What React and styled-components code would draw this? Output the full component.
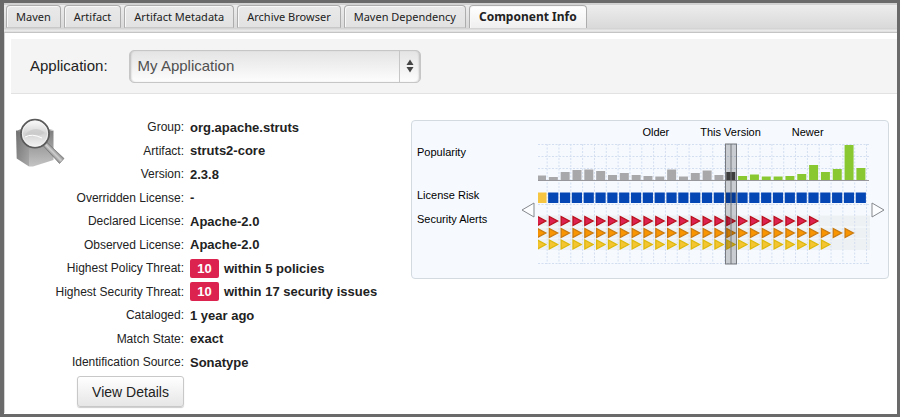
import React from 'react';
import styled, { createGlobalStyle } from 'styled-components';

const GlobalStyle = createGlobalStyle`
  *, *::before, *::after {
    box-sizing: border-box;
  }

  body {
    margin: 0;
    background: #fff;
    color: #222;
    font-family: 'Liberation Sans', Arial, sans-serif;
    font-size: 12px;
  }

  button, select {
    font-family: inherit;
    margin: 0;
  }
`;

const Frame = styled.div`
  min-height: 100vh;
  border: 3px solid #6a6a6a;
  border-left-width: 4px;
  background: #fff;
`;

const Tabs = styled.nav`
  display: flex;
  align-items: flex-end;
  gap: 3px;
  height: 30px;
  padding: 0 2px 4px;
  border-top: 2px solid #d2d2d2;
  border-bottom: 1px solid #c4c4c4;
  background: linear-gradient(#ededed, #d9d9d9 23px, #cfcfcf 24px, #eee 25px, #ddd 27px);
`;

const Tab = styled.button`
  height: 23px;
  padding: 0 9px;
  border: 1px solid #adadad;
  border-bottom: ${props => props.$active ? '0' : '1px solid #c8c8c8'};
  border-radius: 4px 4px 0 0;
  background: ${props => props.$active ? 'linear-gradient(#fff, #efefef)' : 'linear-gradient(#e9e9e9, #e2e2e2)'};
  box-shadow: inset 1px 1px 0 #f8f8f8;
  color: #222;
  font-family: 'Noto Sans', 'Open Sans', sans-serif;
  font-size: ${props => props.$active ? '12px' : '11px'};
  font-weight: ${props => props.$active ? 700 : 400};
  line-height: 20px;
  white-space: nowrap;
`;

const Body = styled.div`
  border-left: 1px solid #d4d4d4;
  padding-top: 6px;
`;

const Toolbar = styled.div`
  display: flex;
  align-items: center;
  gap: 21px;
  height: 55px;
  margin-left: 6px;
  padding-left: 19px;
  background: #f4f4f4;
  border-bottom: 1px solid #e2e2e2;
`;

const ToolbarLabel = styled.label`
  font-size: 15px;
  line-height: 20px;
`;

const SelectBox = styled.div`
  position: relative;
  width: 292px;
  height: 33px;
`;

const Select = styled.select`
  appearance: none;
  width: 100%;
  height: 100%;
  padding: 0 30px 2px 8px;
  border: 1px solid #c6c6c6;
  border-radius: 5px;
  background: linear-gradient(#e4e4e4, #fdfdfd);
  box-shadow: inset 2px 0 2px -1px #bbb, inset -2px 0 2px -1px #bbb;
  color: #505050;
  font-size: 15px;
`;

const SelectArrows = styled.span`
  position: absolute;
  top: 1px;
  right: 1px;
  bottom: 1px;
  width: 21px;
  display: flex;
  align-items: center;
  justify-content: center;
  border-left: 1px solid #c6c6c6;
  pointer-events: none;
`;

const Content = styled.main`
  display: flex;
  align-items: flex-start;
  padding: 21px 8px 6px 10px;
`;

const Details = styled.section`
  flex: 1;
  display: flex;
  align-items: flex-start;
`;

const Icon = styled.svg`
  flex: none;
  margin-top: 3px;
`;

// the longest names reach back under the icon
const Facts = styled.div`
  display: flex;
  flex-direction: column;
  margin-left: -14px;
`;

const FactList = styled.dl`
  display: grid;
  grid-template-columns: 133px auto;
  grid-auto-rows: 24px 23px;
  column-gap: 6px;
  align-items: center;
  margin: 0;
`;

const FactName = styled.dt`
  text-align: right;
  white-space: nowrap;
`;

const FactValue = styled.dd`
  display: flex;
  align-items: center;
  gap: 5px;
  margin: 0;
  font-size: 13px;
  font-weight: 700;
  white-space: nowrap;
`;

const Threat = styled.span`
  width: 29px;
  border-radius: 2px;
  background: #dc234f;
  color: #fff;
  line-height: 19px;
  text-align: center;
`;

const DetailsButton = styled.button`
  width: 107px;
  height: 31px;
  margin: 2px 0 0 26px;
  padding: 0;
  border: 1px solid #c8c8c8;
  border-radius: 3px;
  background: linear-gradient(#fff, #e6e6e6);
  box-shadow: 0 1px 1px #ccc;
  color: #222;
  font-size: 14px;
`;

const VersionPanel = styled.section`
  display: flex;
  align-items: flex-start;
  margin-top: 5px;
  padding: 4px 3px 13px 5px;
  border: 1px solid #d3dbe1;
  border-radius: 4px;
  background: #f6faff;
  color: #000;
`;

const RowNames = styled.div`
  display: grid;
  grid-template-rows: 43px 24px 23px;
  width: 104px;
  padding-top: 20px;
  font-size: 11px;
  line-height: 15px;
`;

const Plot = styled.div`
  display: flex;
  flex-direction: column;
  gap: 4px;
`;

const PlotHeader = styled.div`
  display: flex;
  justify-content: center;
  gap: 31px;
  padding-left: 58px;
  font-size: 11px;
  line-height: 14px;
`;

const PageButton = styled.button`
  display: flex;
  align-items: center;
  width: ${props => props.$newer ? '15px' : '17px'};
  height: 20px;
  margin-top: 75px;
  padding: 0;
  border: 0;
  background: none;
  justify-content: ${props => props.$newer ? 'flex-end' : 'flex-start'};

  svg {
    flex: none;
  }
`;

const tabs = ['Maven', 'Artifact', 'Artifact Metadata', 'Archive Browser', 'Maven Dependency', 'Component Info'];

const facts = [
  { name: 'Group:', value: 'org.apache.struts' },
  { name: 'Artifact:', value: 'struts2-core' },
  { name: 'Version:', value: '2.3.8' },
  { name: 'Overridden License:', value: '-' },
  { name: 'Declared License:', value: 'Apache-2.0' },
  { name: 'Observed License:', value: 'Apache-2.0' },
  { name: 'Highest Policy Threat:', threat: 10, value: 'within 5 policies' },
  { name: 'Highest Security Threat:', threat: 10, value: 'within 17 security issues' },
  { name: 'Cataloged:', value: '1 year ago' },
  { name: 'Match State:', value: 'exact' },
  { name: 'Identification Source:', value: 'Sonatype' },
];

const popularity = [
  4.5, 3, 8, 10, 10.5, 9, 5, 7, 5, 4, 3.5, 10.5, 3.5, 7, 9.5, 5, 8,
  4, 5.5, 3.5, 3.5, 4, 6, 15, 8, 11, 35, 12,
];
const CURRENT = 16;
const PITCH = 11.83;

const alerts = [
  { count: 24, y: 72.5, fill: '#dc234f', stroke: '#b90f1c' },
  { count: 27, y: 84.5, fill: '#f99500', stroke: '#c97a10' },
  { count: 25, y: 96, fill: '#f5c431', stroke: '#dcb80c' },
];

// left edge of a version column; the first one is cut by the plot edge
const columnX = index => index * PITCH - 1.7;

const barColor = index => {
  if (index === CURRENT) return '#4b4b4b';
  return index < CURRENT ? '#a8a8ab' : '#8ac832';
};

const ComponentIcon = () => (
  <Icon width="50" height="50" viewBox="0 0 50 50" aria-hidden="true">
    <defs>
      <linearGradient id="cubeLeft" x1="0" y1="0" x2="1" y2="1">
        <stop offset="0" stopColor="#6f6f6f" />
        <stop offset="1" stopColor="#a9a9a9" />
      </linearGradient>
      <linearGradient id="cubeRight" x1="0" y1="0" x2="0" y2="1">
        <stop offset="0" stopColor="#7f7f7f" />
        <stop offset="1" stopColor="#c4c4c4" />
      </linearGradient>
      <linearGradient id="lens" x1="0" y1="0" x2="0" y2="1">
        <stop offset="0" stopColor="#fdfdfd" />
        <stop offset="0.5" stopColor="#d4d4d4" />
        <stop offset="1" stopColor="#f4f4f4" />
      </linearGradient>
      <linearGradient id="handle" x1="0" y1="1" x2="1" y2="0">
        <stop offset="0.3" stopColor="#4e4e4e" />
        <stop offset="0.5" stopColor="#d0d0d0" />
        <stop offset="0.7" stopColor="#555" />
      </linearGradient>
    </defs>
    <path d="M1 13 L14 8 L38 12 L15 19 Z" fill="#8b8b8b" />
    <path d="M1 12.5 L14 17 V48.6 L1.7 40.5 Z" fill="url(#cubeLeft)" />
    <path d="M14 17 L38.5 12.5 V42 L18 48.6 H14 Z" fill="url(#cubeRight)" />
    <path d="M28.5 28 L32 24.5 L49 40.5 L44.5 45.5 Z" fill="url(#handle)" stroke="#666" strokeWidth="0.6" />
    <circle cx="20" cy="15.7" r="14" fill="url(#lens)" stroke="#5a5a5a" strokeWidth="1.8" />
    <circle cx="20" cy="15.7" r="12.6" fill="none" stroke="#f4f4f4" strokeWidth="0.8" />
    <path d="M9 19 Q12 12 20 11 Q26 11 30 15 Q25 18 19 18 Q13 18 9 19 Z" fill="#c4c4c4" opacity="0.6" />
    <path d="M10 19 Q17 15 27 20" fill="none" stroke="#fff" strokeWidth="1" />
  </Icon>
);

const VersionPlot = () => (
  <svg width="332" height="122" viewBox="0 0 332 122" role="img" aria-label="Versions">
    {alerts.map(({ y }) => (
      <rect key={y} x="0" y={y} width="332" height="11" fill="#eef1f4" />
    ))}
    <g stroke="#d3def0" strokeDasharray="2 1.5">
      {[1.5, 13.5, 25.5, 61.5, 120.5].map(y => (
        <line key={y} x1="0" y1={y} x2="331" y2={y} />
      ))}
      {popularity.map((_, index) => (
        <line key={index} x1={columnX(index + 1) - 1} y1="1" x2={columnX(index + 1) - 1} y2="121" />
      ))}
    </g>
    {popularity.map((height, index) => (
      <g key={index}>
        <rect x={columnX(index) + 0.7} y={37 - height} width="9" height={height} fill={barColor(index)} />
        <rect x={columnX(index)} y="49.5" width="10.2" height="10.5" fill={index === 0 ? '#f6c643' : '#0546b5'} />
      </g>
    ))}
    <line x1="0" y1="37.5" x2="331" y2="37.5" stroke="#96969b" />
    {alerts.map(({ count, y, fill, stroke }) => (
      <g key={fill} fill={fill} stroke={stroke} strokeWidth="1.3">
        {popularity.slice(0, count).map((_, index) => (
          <path
            key={index}
            d="M0.7 1 L9 5.5 L0.7 10 Z"
            transform={`translate(${columnX(index) + 0.5} ${y})`}
          />
        ))}
      </g>
    ))}
    <rect x="187.5" y="1" width="11" height="120" fill="#000" fillOpacity="0.18" stroke="#777b7f" />
    <line x1="193" y1="1" x2="193" y2="121" stroke="#777b7f" />
  </svg>
);

const App = () => (
  <>
    <GlobalStyle />
    <Frame>
      <Tabs>
        {tabs.map(tab => (
          <Tab key={tab} type="button" $active={tab === 'Component Info'}>{tab}</Tab>
        ))}
      </Tabs>
      <Body>
        <Toolbar>
          <ToolbarLabel htmlFor="application">Application:</ToolbarLabel>
          <SelectBox>
            <Select id="application" defaultValue="My Application">
              <option>My Application</option>
            </Select>
            <SelectArrows>
              <svg width="8" height="14" viewBox="0 0 8 14" fill="#444">
                <path d="M4 0.5 L7.5 6 H0.5 Z" />
                <path d="M4 13.5 L7.5 8 H0.5 Z" />
              </svg>
            </SelectArrows>
          </SelectBox>
        </Toolbar>
        <Content>
          <Details>
            <ComponentIcon />
            <Facts>
              <FactList>
                {facts.map(({ name, threat, value }) => (
                  <React.Fragment key={name}>
                    <FactName>{name}</FactName>
                    <FactValue>
                      {threat && <Threat>{threat}</Threat>}
                      {value}
                    </FactValue>
                  </React.Fragment>
                ))}
              </FactList>
              <DetailsButton type="button">View Details</DetailsButton>
            </Facts>
          </Details>
          <VersionPanel>
            <RowNames>
              <span>Popularity</span>
              <span>License Risk</span>
              <span>Security Alerts</span>
            </RowNames>
            <PageButton type="button" aria-label="Older versions">
              <svg width="14" height="16" viewBox="0 0 14 16" fill="#fcfdff" stroke="#85898d">
                <path d="M13 1 V15 L1 8 Z" />
              </svg>
            </PageButton>
            <Plot>
              <PlotHeader>
                <span>Older</span>
                <span>This Version</span>
                <span>Newer</span>
              </PlotHeader>
              <VersionPlot />
            </Plot>
            <PageButton type="button" aria-label="Newer versions" $newer>
              <svg width="14" height="16" viewBox="0 0 14 16" fill="#fcfdff" stroke="#85898d">
                <path d="M1 1 V15 L13 8 Z" />
              </svg>
            </PageButton>
          </VersionPanel>
        </Content>
      </Body>
    </Frame>
  </>
);

export default App;
